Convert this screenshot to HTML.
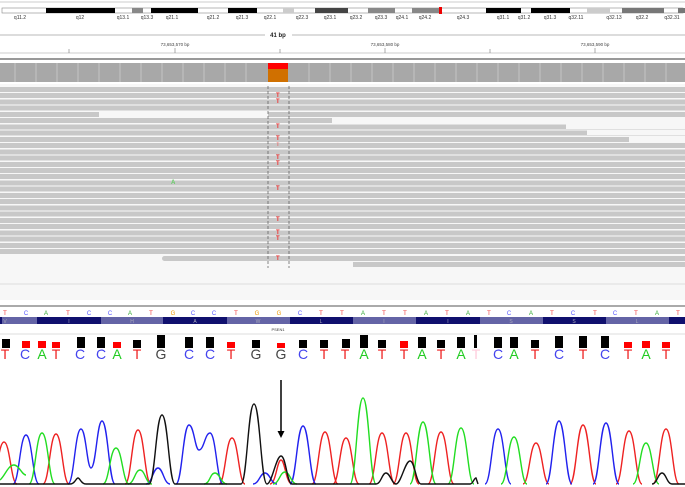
<!DOCTYPE html>
<html><head><meta charset="utf-8"><style>
body{margin:0;width:685px;height:487px;overflow:hidden;background:#fff;font-family:"Liberation Sans",sans-serif;position:relative}
.a{position:absolute}
.reads{left:0;top:86.7px;width:685px;height:168.2px;background:repeating-linear-gradient(#c8c8c8 0 5px,#f7f7f7 5px 6.23px)}
.w{position:absolute;background:#f7f7f7;height:5px}
.g{position:absolute;background:#c8c8c8;height:5px}
.t{position:absolute;color:#e33;font-size:6px;font-weight:bold;left:276px;line-height:6px}
</style></head><body>
<div class="a" style="left:0;top:84px;width:685px;height:216px;background:#f7f7f7"></div>
<div class="a reads"></div>
<div class="w" style="left:99px;top:111.6px;width:169px"></div>
<div class="w" style="left:332px;top:117.9px;width:353px"></div>
<div class="w" style="left:566px;top:124.1px;width:119px"></div>
<div class="w" style="left:587px;top:130.3px;width:98px"></div>
<div class="w" style="left:629px;top:136.5px;width:56px"></div>
<div class="g" style="left:162px;top:256px;width:523px;border-radius:3px 0 0 3px"></div>
<div class="g" style="left:353px;top:262.3px;width:332px"></div>
<div class="t" style="top:92.5px">T</div><div class="t" style="top:98.8px">T</div>
<div class="t" style="top:123.7px">T</div><div class="t" style="top:136.1px">T</div>
<div class="t" style="top:142.4px;opacity:.5">T</div><div class="t" style="top:154.8px">T</div>
<div class="t" style="top:161.1px">T</div><div class="t" style="top:186px">T</div>
<div class="t" style="top:217.1px">T</div><div class="t" style="top:229.6px">T</div>
<div class="t" style="top:235.8px">T</div><div class="t" style="top:256px">T</div>
<div class="t" style="top:180px;left:171px;color:#6c6">A</div>
<svg class="a" style="left:0;top:0" width="685" height="487" xmlns="http://www.w3.org/2000/svg" font-family="Liberation Sans,sans-serif">
<line x1="0" y1="2" x2="685" y2="2" stroke="#ccc"/>
<g stroke="#888" stroke-width=".6">
<rect x="2" y="8" width="681" height="5" fill="#fff"/>
</g>
<g>
<rect x="46" y="8" width="69" height="5" fill="#000"/><rect x="132" y="8" width="11" height="5" fill="#888"/>
<rect x="151" y="8" width="47" height="5" fill="#000"/><rect x="228" y="8" width="29" height="5" fill="#000"/>
<rect x="283" y="8" width="11" height="5" fill="#ccc"/><rect x="315" y="8" width="33" height="5" fill="#444"/>
<rect x="368" y="8" width="27" height="5" fill="#888"/><rect x="412" y="8" width="27" height="5" fill="#888"/>
<rect x="439" y="7" width="3" height="7" fill="#e00"/><rect x="486" y="8" width="35" height="5" fill="#000"/>
<rect x="531" y="8" width="39" height="5" fill="#000"/><rect x="587" y="8" width="23" height="5" fill="#ccc"/>
<rect x="622" y="8" width="42" height="5" fill="#777"/><rect x="678" y="8" width="7" height="5" fill="#777"/>
</g>
<g font-size="5" fill="#333" text-anchor="middle">
<text x="20" y="19">q11.2</text><text x="80" y="19">q12</text><text x="123" y="19">q13.1</text><text x="147" y="19">q13.3</text><text x="172" y="19">q21.1</text><text x="213" y="19">q21.2</text><text x="242" y="19">q21.3</text><text x="270" y="19">q22.1</text><text x="302" y="19">q22.3</text><text x="330" y="19">q23.1</text><text x="356" y="19">q23.2</text><text x="381" y="19">q23.3</text><text x="402" y="19">q24.1</text><text x="425" y="19">q24.2</text><text x="463" y="19">q24.3</text><text x="503" y="19">q31.1</text><text x="524" y="19">q31.2</text><text x="550" y="19">q31.3</text><text x="576" y="19">q32.11</text><text x="614" y="19">q32.13</text><text x="642" y="19">q32.2</text><text x="672" y="19">q32.31</text>
</g>
<line x1="0" y1="35" x2="265" y2="35" stroke="#777" stroke-width=".6"/><line x1="292" y1="35" x2="685" y2="35" stroke="#777" stroke-width=".6"/>
<text x="278" y="37" font-size="6" font-weight="bold" text-anchor="middle" fill="#222">41 bp</text>
<line x1="0" y1="53" x2="685" y2="53" stroke="#999" stroke-width=".6"/>
<g stroke="#777" stroke-width=".6"><line x1="69" y1="49" x2="69" y2="53"/><line x1="175" y1="48" x2="175" y2="53"/><line x1="280" y1="49" x2="280" y2="53"/><line x1="385" y1="48" x2="385" y2="53"/><line x1="490" y1="49" x2="490" y2="53"/><line x1="595" y1="48" x2="595" y2="53"/></g>
<g font-size="4.5" fill="#444" text-anchor="middle"><text x="175" y="46">73,653,570 bp</text><text x="385" y="46">73,653,580 bp</text><text x="595" y="46">73,653,590 bp</text></g>
<rect x="0" y="58" width="685" height="2" fill="#999"/>
<rect x="0" y="63" width="685" height="19" fill="#a8a8a8"/>
<g stroke="#ccc" stroke-width=".8">
<line x1="15" y1="63" x2="15" y2="82"/><line x1="36" y1="63" x2="36" y2="82"/><line x1="57" y1="63" x2="57" y2="82"/><line x1="78" y1="63" x2="78" y2="82"/><line x1="99" y1="63" x2="99" y2="82"/><line x1="120" y1="63" x2="120" y2="82"/><line x1="141" y1="63" x2="141" y2="82"/><line x1="162" y1="63" x2="162" y2="82"/><line x1="183" y1="63" x2="183" y2="82"/><line x1="204" y1="63" x2="204" y2="82"/><line x1="225" y1="63" x2="225" y2="82"/><line x1="246" y1="63" x2="246" y2="82"/><line x1="309" y1="63" x2="309" y2="82"/><line x1="330" y1="63" x2="330" y2="82"/><line x1="351" y1="63" x2="351" y2="82"/><line x1="372" y1="63" x2="372" y2="82"/><line x1="393" y1="63" x2="393" y2="82"/><line x1="414" y1="63" x2="414" y2="82"/><line x1="435" y1="63" x2="435" y2="82"/><line x1="456" y1="63" x2="456" y2="82"/><line x1="477" y1="63" x2="477" y2="82"/><line x1="498" y1="63" x2="498" y2="82"/><line x1="519" y1="63" x2="519" y2="82"/><line x1="540" y1="63" x2="540" y2="82"/><line x1="561" y1="63" x2="561" y2="82"/><line x1="582" y1="63" x2="582" y2="82"/><line x1="603" y1="63" x2="603" y2="82"/><line x1="624" y1="63" x2="624" y2="82"/><line x1="645" y1="63" x2="645" y2="82"/><line x1="666" y1="63" x2="666" y2="82"/>
</g>
<rect x="268" y="63" width="20" height="6" fill="#f00"/><rect x="268" y="69" width="20" height="13" fill="#d07000"/>
<g stroke="#555" stroke-width=".7" stroke-dasharray="3,2"><line x1="268" y1="86" x2="268" y2="268"/><line x1="289" y1="86" x2="289" y2="268"/></g>
<line x1="0" y1="284" x2="685" y2="284" stroke="#ddd"/>
<rect x="0" y="305" width="685" height="2" fill="#aaa"/>
<g font-size="6" text-anchor="middle">
<text x="5" y="315" fill="#e33">T</text><text x="26" y="315" fill="#55f">C</text><text x="46" y="315" fill="#3a3">A</text><text x="68" y="315" fill="#e33">T</text><text x="89" y="315" fill="#55f">C</text><text x="110" y="315" fill="#55f">C</text><text x="130" y="315" fill="#3a3">A</text><text x="151" y="315" fill="#e33">T</text><text x="173" y="315" fill="#e90">G</text><text x="193" y="315" fill="#55f">C</text><text x="214" y="315" fill="#55f">C</text><text x="236" y="315" fill="#e33">T</text><text x="257" y="315" fill="#e90">G</text><text x="279" y="315" fill="#e90">G</text><text x="300" y="315" fill="#55f">C</text><text x="321" y="315" fill="#e33">T</text><text x="342" y="315" fill="#e33">T</text><text x="363" y="315" fill="#3a3">A</text><text x="384" y="315" fill="#e33">T</text><text x="405" y="315" fill="#e33">T</text><text x="426" y="315" fill="#3a3">A</text><text x="447" y="315" fill="#e33">T</text><text x="468" y="315" fill="#3a3">A</text><text x="489" y="315" fill="#e33">T</text><text x="509" y="315" fill="#55f">C</text><text x="531" y="315" fill="#3a3">A</text><text x="552" y="315" fill="#e33">T</text><text x="573" y="315" fill="#55f">C</text><text x="595" y="315" fill="#e33">T</text><text x="615" y="315" fill="#55f">C</text><text x="636" y="315" fill="#e33">T</text><text x="657" y="315" fill="#3a3">A</text><text x="678" y="315" fill="#e33">T</text>
</g>
<rect x="0" y="317" width="685" height="7" fill="#10106e"/>
<g fill="#6464a6"><rect x="2" y="317" width="35" height="7"/><rect x="101" y="317" width="62" height="7"/><rect x="227" y="317" width="63" height="7"/><rect x="353" y="317" width="63" height="7"/><rect x="480" y="317" width="63" height="7"/><rect x="606" y="317" width="63" height="7"/></g>
<g font-size="5" fill="#aab" text-anchor="middle"><text x="5" y="323">V</text><text x="69" y="323">I</text><text x="132" y="323">H</text><text x="195" y="323">A</text><text x="258" y="323">W</text><text x="321" y="323">L</text><text x="384" y="323">I</text><text x="448" y="323">I</text><text x="511" y="323">S</text><text x="574" y="323">S</text><text x="637" y="323">L</text></g>
<text x="278" y="331" font-size="4" fill="#333" text-anchor="middle">PSEN1</text>
<line x1="0" y1="334" x2="685" y2="334" stroke="#ddd"/>
<g fill="#000">
<rect x="2" y="339" width="8" height="9"/><rect x="77" y="337" width="8" height="11"/><rect x="97" y="337" width="8" height="11"/><rect x="133" y="340" width="8" height="8"/><rect x="157" y="335" width="8" height="13"/><rect x="185" y="337" width="8" height="11"/><rect x="206" y="337" width="8" height="11"/><rect x="252" y="340" width="8" height="8"/><rect x="299" y="340" width="8" height="8"/><rect x="320" y="340" width="8" height="8"/><rect x="342" y="339" width="8" height="9"/><rect x="360" y="335" width="8" height="13"/><rect x="378" y="340" width="8" height="8"/><rect x="418" y="337" width="8" height="11"/><rect x="437" y="340" width="8" height="8"/><rect x="457" y="337" width="8" height="11"/><rect x="474" y="335" width="3" height="13"/><rect x="494" y="337" width="8" height="11"/><rect x="510" y="337" width="8" height="11"/><rect x="531" y="340" width="8" height="8"/><rect x="555" y="336" width="8" height="12"/><rect x="579" y="336" width="8" height="12"/><rect x="601" y="336" width="8" height="12"/>
</g>
<g fill="#f00">
<rect x="22" y="341" width="8" height="7"/><rect x="38" y="341" width="8" height="7"/><rect x="52" y="342" width="8" height="6"/><rect x="113" y="342" width="8" height="6"/><rect x="227" y="342" width="8" height="6"/><rect x="277" y="343" width="8" height="5"/><rect x="400" y="341" width="8" height="7"/><rect x="624" y="342" width="8" height="6"/><rect x="642" y="341" width="8" height="7"/><rect x="662" y="342" width="8" height="6"/>
</g>
<g font-size="14" text-anchor="middle">
<text x="5" y="359" fill="#e22">T</text><text x="25" y="359" fill="#44e">C</text><text x="42" y="359" fill="#2c2">A</text><text x="56" y="359" fill="#e22">T</text><text x="80" y="359" fill="#44e">C</text><text x="101" y="359" fill="#44e">C</text><text x="117" y="359" fill="#2c2">A</text><text x="137" y="359" fill="#e22">T</text><text x="161" y="359" fill="#444">G</text><text x="189" y="359" fill="#44e">C</text><text x="210" y="359" fill="#44e">C</text><text x="231" y="359" fill="#e22">T</text><text x="256" y="359" fill="#444">G</text><text x="281" y="359" fill="#444">G</text><text x="303" y="359" fill="#44e">C</text><text x="324" y="359" fill="#e22">T</text><text x="345" y="359" fill="#e22">T</text><text x="364" y="359" fill="#2c2">A</text><text x="382" y="359" fill="#e22">T</text><text x="404" y="359" fill="#e22">T</text><text x="422" y="359" fill="#2c2">A</text><text x="441" y="359" fill="#e22">T</text><text x="461" y="359" fill="#2c2">A</text><text x="476" y="359" fill="#fcd">T</text><text x="498" y="359" fill="#44e">C</text><text x="514" y="359" fill="#2c2">A</text><text x="535" y="359" fill="#e22">T</text><text x="559" y="359" fill="#44e">C</text><text x="583" y="359" fill="#e22">T</text><text x="605" y="359" fill="#44e">C</text><text x="628" y="359" fill="#e22">T</text><text x="646" y="359" fill="#2c2">A</text><text x="666" y="359" fill="#e22">T</text>
</g>
<line x1="281" y1="380" x2="281" y2="433" stroke="#000" stroke-width="1.5"/>
<path d="M277.5 431 L281 438 L284.5 431 Z" fill="#000"/>
<g fill="none" stroke-width="1.4">
<g stroke="#e22">
<path d="M-9 484 C-3 484 -2 442 4 442 C10 442 11 484 17 484"/>
<path d="M43 484 C49 484 50 434 56 434 C62 434 63 484 69 484"/>
<path d="M125 484 C131 484 132 430 138 430 C144 430 145 484 151 484"/>
<path d="M219 484 C225 484 226 438 232 438 C238 438 239 484 245 484"/>
<path d="M270 484 C276 484 277 460 281 460 C285 460 286 484 292 484"/>
<path d="M312 484 C318 484 319 432 325 432 C331 432 332 484 338 484"/>
<path d="M333 484 C339 484 340 438 346 438 C352 438 353 484 359 484"/>
<path d="M369 484 C375 484 376 433 382 433 C388 433 389 484 395 484"/>
<path d="M393 484 C399 484 400 433 406 433 C412 433 413 484 419 484"/>
<path d="M428 484 C434 484 435 432 441 432 C447 432 448 484 454 484"/>
<path d="M523 484 C529 484 530 443 536 443 C542 443 543 484 549 484"/>
<path d="M570 484 C576 484 577 425 583 425 C589 425 590 484 596 484"/>
<path d="M616 484 C622 484 623 431 629 431 C635 431 636 484 642 484"/>
<path d="M653 484 C659 484 660 429 666 429 C672 429 673 484 679 484"/>
</g>
<g stroke="#22e">
<path d="M13 484 C19 484 20 435 26 435 C32 435 33 484 39 484"/>
<path d="M68 484 C74 484 75 429 81 429 C86 429 87 468 91 468 C96 468 97 421 102 421 C108 421 109 484 115 484"/>
<path d="M146 484 C152 484 153 468 158 468 C163 468 164 484 170 484"/>
<path d="M176 484 C182 484 183 425 189 425 C194 425 195 450 199 450 C204 450 205 433 210 433 C216 433 217 484 223 484"/>
<path d="M253 484 C259 484 260 473 265 473 C270 473 271 484 277 484"/>
<path d="M290 484 C296 484 297 426 303 426 C309 426 310 484 316 484"/>
<path d="M485 484 C491 484 492 429 498 429 C504 429 505 484 511 484"/>
<path d="M546 484 C552 484 553 421 559 421 C565 421 566 484 572 484"/>
<path d="M593 484 C599 484 600 423 606 423 C612 423 613 484 619 484"/>
</g>
<g stroke="#2d2">
<path d="M0 480 C5 476 8 465 14 465 C19 465 22 475 26 475"/>
<path d="M29 484 C35 484 36 433 42 433 C48 433 49 484 55 484"/>
<path d="M103 484 C109 484 110 448 116 448 C122 448 123 484 129 484"/>
<path d="M128 484 C134 484 135 470 140 470 C145 470 146 484 152 484"/>
<path d="M204 484 C210 484 210 473 215 473 C220 473 221 484 227 484"/>
<path d="M273 484 C279 484 280 472 285 472 C290 472 291 484 297 484"/>
<path d="M350 484 C356 484 357 398 363 398 C369 398 370 484 376 484"/>
<path d="M410 484 C416 484 417 422 423 422 C429 422 430 484 436 484"/>
<path d="M448 484 C454 484 455 428 461 428 C467 428 468 484 474 484"/>
<path d="M501 484 C507 484 508 437 514 437 C520 437 521 484 527 484"/>
<path d="M633 484 C639 484 640 443 646 443 C652 443 653 484 659 484"/>
</g>
<g stroke="#111">
<path d="M0 484 L70 484 C75 484 76 478 78 478 C80 478 81 484 86 484 L149 484 C155 484 156 415 162 415 C168 415 169 484 175 484 L241 484 C247 484 248 404 254 404 C260 404 261 484 267 484 C272 484 276 456 281 456 C286 456 287 484 292 484 L376 484 C381 484 382 473 386 473 C390 473 392 484 396 484 C401 484 405 461 410 461 C415 461 416 484 421 484 L470 484 C473 484 474 478 476 478 L478 484 M652 484 C657 484 658 473 662 473 C666 473 667 484 672 484 L685 484"/>
</g>
</g>
</svg>
</body></html>
